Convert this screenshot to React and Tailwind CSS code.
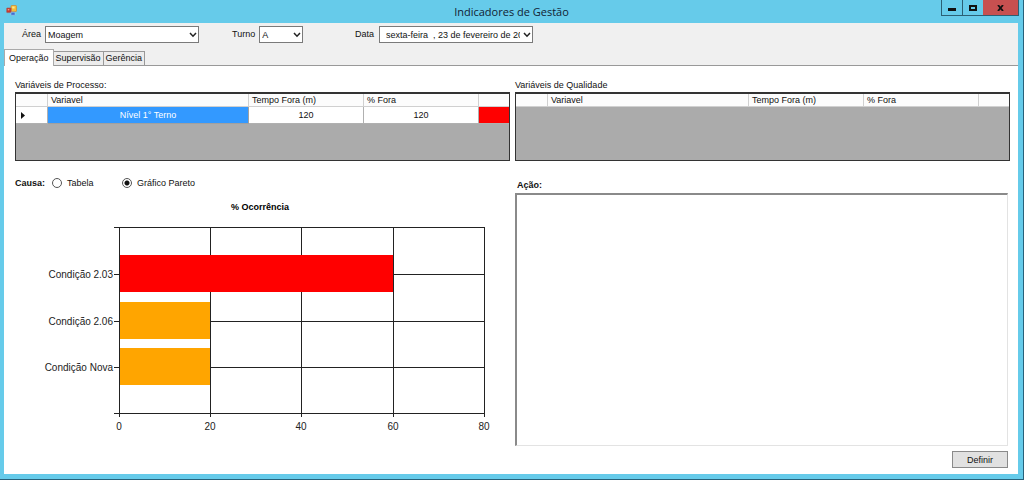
import { useState } from "react";

function Chevron() {
  return (
    <svg viewBox="0 0 8 6" className="pointer-events-none absolute right-[2px] top-[6px] h-[6px] w-[8px]" fill="none" stroke="#222" strokeWidth="1.5" aria-hidden="true">
      <path d="M1 1 L4 4.2 L7 1" />
    </svg>
  );
}

function AppIcon() {
  return (
    <svg viewBox="0 0 11 11" className="h-[11px] w-[11px]" aria-hidden="true">
      <rect x="5" y="0.5" width="5.5" height="6" rx="0.6" fill="#f4bd3a" stroke="#c98f3c" strokeWidth="0.8" />
      <rect x="6.2" y="1.5" width="2.4" height="2" fill="#ffe68a" />
      <rect x="0.7" y="3" width="4.4" height="4.6" rx="0.5" fill="#c8372d" stroke="#a05a5a" strokeWidth="0.6" />
      <rect x="1.8" y="4" width="1.5" height="1.4" fill="#ee9a84" />
      <rect x="5" y="7.2" width="4" height="3" rx="0.5" fill="#3f6fd0" stroke="#b9d2f0" strokeWidth="0.5" />
    </svg>
  );
}

function Combo({ id, label, options, className }) {
  return (
    <div className="flex items-center gap-[4px]">
      <label htmlFor={id}>{label}</label>
      <div className={"relative " + className}>
        <select id={id} className="block h-[17px] w-full appearance-none border border-[#7a7a7a] bg-white pl-[2px] text-[9px] leading-[14px] text-[#111]">
          {options.map((o) => (
            <option key={o}>{o}</option>
          ))}
        </select>
        <Chevron />
      </div>
    </div>
  );
}

function VariableGrid({ title, rows }) {
  const head = "border-b border-r border-[#d0d0d0] p-0 pl-[3px] text-left font-normal";
  return (
    <section className="min-w-0">
      <h2 className="h-[14px] leading-[14px]">{title}</h2>
      <div className="h-[69px] border border-t-2 border-[#333] bg-[#ababab]">
        <table className="w-full table-fixed border-separate border-spacing-0" aria-label={title}>
          <colgroup>
            <col className="w-[32px]" />
            <col />
            <col className="w-[115px]" />
            <col className="w-[115px]" />
            <col className="w-[30px]" />
          </colgroup>
          <thead>
            <tr className="h-[13px] bg-[#fcfcfc] leading-[12px]">
              <th className={head}></th>
              <th className={head}>Variavel</th>
              <th className={head}>Tempo Fora (m)</th>
              <th className={head}>% Fora</th>
              <th className="border-b border-[#d0d0d0] p-0"></th>
            </tr>
          </thead>
          <tbody>
            {rows.map((r) => (
              <tr key={r.name} className="h-[17px] bg-white text-center leading-[15px]">
                <td className="border-b border-r border-[#b0b0b0] p-0 pl-[5px]">
                  <svg viewBox="0 0 4 7" className="h-[7px] w-[4px]" aria-hidden="true">
                    <path d="M0 0 L4 3.5 L0 7 Z" fill="#111" />
                  </svg>
                </td>
                <td className="border-b border-r border-[#a0a0a0] bg-[#3399ff] p-0 text-white">{r.name}</td>
                <td className="border-b border-r border-[#b0b0b0] p-0">{r.time}</td>
                <td className="border-b border-r border-[#b0b0b0] p-0">{r.percent}</td>
                <td className="border-b border-[#b0b0b0] bg-[#ff0000] p-0"></td>
              </tr>
            ))}
          </tbody>
        </table>
      </div>
    </section>
  );
}

const bars = [
  { label: "Condição 2.03", value: 60, color: "#ff0000", y: 81 },
  { label: "Condição 2.06", value: 20, color: "#ffa500", y: 128 },
  { label: "Condição Nova", value: 20, color: "#ffa500", y: 174 },
];
const ticks = [0, 20, 40, 60, 80];
const px = (v) => 104 + Math.round(v * 4.56);

function ParetoChart() {
  return (
    <svg viewBox="0 0 495 245" className="block w-full font-['Liberation_Sans',sans-serif]" role="img" aria-label="% Ocorrência">
      <text x="245" y="17" textAnchor="middle" fontSize="9" fontWeight="bold" fill="#000">% Ocorrência</text>
      <g stroke="#222" strokeWidth="1" shapeRendering="crispEdges">
        {ticks.map((t) => (
          <line key={t} x1={px(t) + 0.5} x2={px(t) + 0.5} y1="34" y2="224" />
        ))}
        {[34, 81, 128, 174, 220].map((y) => (
          <line key={y} x1="99" x2={px(80) + 1} y1={y + 0.5} y2={y + 0.5} />
        ))}
      </g>
      {bars.map((b) => (
        <g key={b.label}>
          <rect x="105" y={b.y - 19} width={px(b.value) - 105} height="37" fill={b.color} />
          <text x="98" y={b.y + 4} textAnchor="end" fontSize="10" fill="#222">{b.label}</text>
        </g>
      ))}
      {ticks.map((t) => (
        <text key={t} x={px(t)} y="237" textAnchor="middle" fontSize="10" fill="#222">{t}</text>
      ))}
    </svg>
  );
}

function Radio({ label, value, current, onChange }) {
  return (
    <label className="flex items-center gap-[5px] leading-[14px]">
      <input
        type="radio"
        name="causa"
        checked={current === value}
        onChange={() => onChange(value)}
        className="h-[10px] w-[10px] appearance-none rounded-full border border-[#555] bg-white checked:bg-[radial-gradient(circle,#111_0_2px,#fff_3px)]"
      />
      {label}
    </label>
  );
}

export default function App() {
  const [view, setView] = useState("grafico");
  const [tab, setTab] = useState("Operação");
  return (
    <div className="flex min-h-screen flex-col border-b border-r border-[#27617a] bg-[#66cbea] font-['Liberation_Sans',sans-serif] text-[9px] text-[#111]">
      <header className="grid h-[23px] grid-cols-[1fr_auto_1fr] items-start">
        <div className="pl-[6px] pt-[5px]"><AppIcon /></div>
        <h1 className="font-['Open_Sans',sans-serif] text-[11px] leading-[23px] text-[#123]">Indicadores de Gestão</h1>
        <div className="mr-[4px] flex h-[16px] justify-self-end border border-t-0 border-[#2b6075]">
          <button aria-label="Minimizar" className="flex w-[21px] items-center justify-center border-r border-[#2b6075]">
            <svg viewBox="0 0 8 8" className="h-[8px] w-[8px]"><rect x="0" y="4" width="8" height="3" fill="#111" /></svg>
          </button>
          <button aria-label="Maximizar" className="flex w-[20px] items-center justify-center">
            <svg viewBox="0 0 8 6" className="h-[6px] w-[8px]"><rect x="1" y="1" width="6" height="4" fill="none" stroke="#111" strokeWidth="2" /></svg>
          </button>
          <button aria-label="Fechar" className="flex w-[35px] items-center justify-center bg-[#c75050]">
            <svg viewBox="0 0 7 6" className="h-[6px] w-[7px]"><path d="M1 0 L6 6 M6 0 L1 6" stroke="#111" strokeWidth="1.8" /></svg>
          </button>
        </div>
      </header>

      <main className="ml-[4px] mr-[5px] mb-[5px] flex flex-1 flex-col bg-[#f0f0f0]">
        <div className="flex h-[27px] items-start pl-[18px] pt-[3px]">
          <div className="w-[210px]"><Combo id="area" label="Área" options={["Moagem"]} className="w-[154px]" /></div>
          <div className="w-[123px]"><Combo id="turno" label="Turno" options={["A", "B", "C"]} className="w-[44px]" /></div>
          <div className="flex items-center gap-[5px]">
            <label htmlFor="data">Data</label>
            <div className="relative w-[154px]">
              <input id="data" type="text" defaultValue="sexta-feira  , 23 de fevereiro de 2018" className="block h-[17px] w-full border border-[#7a7a7a] bg-white pl-[6px] pr-[12px] text-[9px]" />
              <Chevron />
            </div>
          </div>
        </div>

        <div role="tablist" className="flex h-[16px] items-end border-b border-[#999]">
          {["Operação", "Supervisão", "Gerência"].map((t) => (
            <button
              key={t}
              role="tab"
              aria-selected={t === tab}
              onClick={() => setTab(t)}
              className={
                t === tab
                  ? "-mb-px h-[17px] border border-b-0 border-[#aaa] bg-white px-[4px] leading-[14px]"
                  : "h-[14px] border border-b-0 border-l-0 border-[#999] bg-[#ececec] px-[2px] leading-[13px]"
              }
            >
              {t}
            </button>
          ))}
        </div>

        <div className="grid flex-1 grid-cols-2 grid-rows-[auto_1fr] gap-x-[5px] bg-white pl-[11px] pr-[8px] pt-[12px]">
          <VariableGrid title="Variáveis de Processo:" rows={[{ name: "Nível 1° Terno", time: 120, percent: 120 }]} />
          <VariableGrid title="Variáveis de Qualidade" rows={[]} />

          <section className="min-w-0 pt-[15px]">
            <div className="flex items-center">
              <h2 className="w-[37px] font-bold leading-[14px]">Causa:</h2>
              <div className="w-[70px]"><Radio label="Tabela" value="tabela" current={view} onChange={setView} /></div>
              <Radio label="Gráfico Pareto" value="grafico" current={view} onChange={setView} />
            </div>
            <div className="pt-[3px]"><ParetoChart /></div>
          </section>

          <section className="flex min-w-0 flex-col pb-[6px] pr-[2px] pt-[17px]">
            <label htmlFor="acao" className="pl-[2px] font-bold leading-[14px]">Ação:</label>
            <textarea id="acao" className="mt-[1px] block w-full flex-1 resize-none border border-l-2 border-t-2 border-[#e3e3e3] border-l-[#8a8a8a] border-t-[#8a8a8a] bg-white" />
            <button className="mt-[5px] h-[17px] w-[56px] self-end border border-[#8a8a8a] bg-[#e1e1e1] leading-[14px]">Definir</button>
          </section>
        </div>
      </main>
    </div>
  );
}
